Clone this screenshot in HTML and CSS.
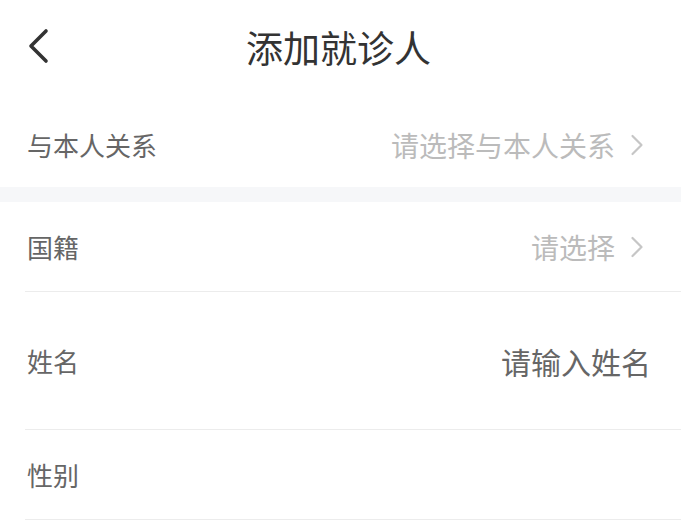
FILE: index.html
```html
<!DOCTYPE html>
<html lang="zh-CN">
<head>
    <meta charset="UTF-8">
    <meta name="viewport" content="width=device-width, initial-scale=1.0">
    <title>添加就诊人</title>
    <link rel="stylesheet" href="styles.css">
</head>
<body>
    <div class="header">
        <span class="back">
            <svg width="24" height="36" viewBox="0 0 24 36"><path d="M20 3 L5 18 L20 33" fill="none" stroke="#333" stroke-width="3.6" stroke-linecap="round" stroke-linejoin="round"/></svg>
        </span>
        <h1>添加就诊人</h1>
    </div>
    <div class="form">
        <div class="row row-first">
            <span class="label">与本人关系</span>
            <span class="value placeholder">请选择与本人关系<svg class="arrow" width="14" height="22" viewBox="0 0 14 22"><path d="M2.5 2 L11.5 11 L2.5 20" fill="none" stroke="#c6c6c6" stroke-width="2.2" stroke-linecap="round" stroke-linejoin="round"/></svg></span>
        </div>
        <div class="gap"></div>
        <div class="row">
            <span class="label">国籍</span>
            <span class="value placeholder">请选择<svg class="arrow" width="14" height="22" viewBox="0 0 14 22"><path d="M2.5 2 L11.5 11 L2.5 20" fill="none" stroke="#c6c6c6" stroke-width="2.2" stroke-linecap="round" stroke-linejoin="round"/></svg></span>
        </div>
        <div class="row row-tall">
            <span class="label">姓名</span>
            <span class="value input">请输入姓名</span>
        </div>
        <div class="row">
            <span class="label">性别</span>
            <span class="value"></span>
        </div>
    </div>
</body>
</html>
```

FILE: styles.css
```css
body {
    font-family: "Noto Sans CJK SC", "Noto Sans", sans-serif;
    margin: 0;
    padding: 0;
    background-color: #fff;
    color: #333;
}
.header {
    height: 102px;
    display: flex;
    align-items: center;
    justify-content: center;
    position: relative;
}
.header h1 {
    margin: 0 4px 8px 0;
    font-size: 37px;
    font-weight: 400;
    color: #333;
    line-height: 1;
}
.back {
    position: absolute;
    left: 26px;
    top: 28px;
}
.back svg {
    display: block;
}
.row {
    height: 89px;
    margin-left: 25px;
    padding-right: 34px;
    display: flex;
    align-items: center;
    justify-content: space-between;
    border-bottom: 1px solid #ececec;
}
.row-first {
    height: 85px;
    border-bottom: none;
}
.row-tall {
    height: 137px;
}
.label {
    font-size: 26px;
    color: #666;
    padding-left: 2px;
}
.value {
    display: flex;
    align-items: center;
    font-size: 28px;
}
.placeholder {
    color: #bbb;
}
.input {
    font-size: 30px;
    color: #666;
    margin-right: -4px;
}
.arrow {
    margin-left: 15px;
    margin-right: 3px;
    display: block;
}
.gap {
    height: 15px;
    background-color: #f6f7f9;
}
```
